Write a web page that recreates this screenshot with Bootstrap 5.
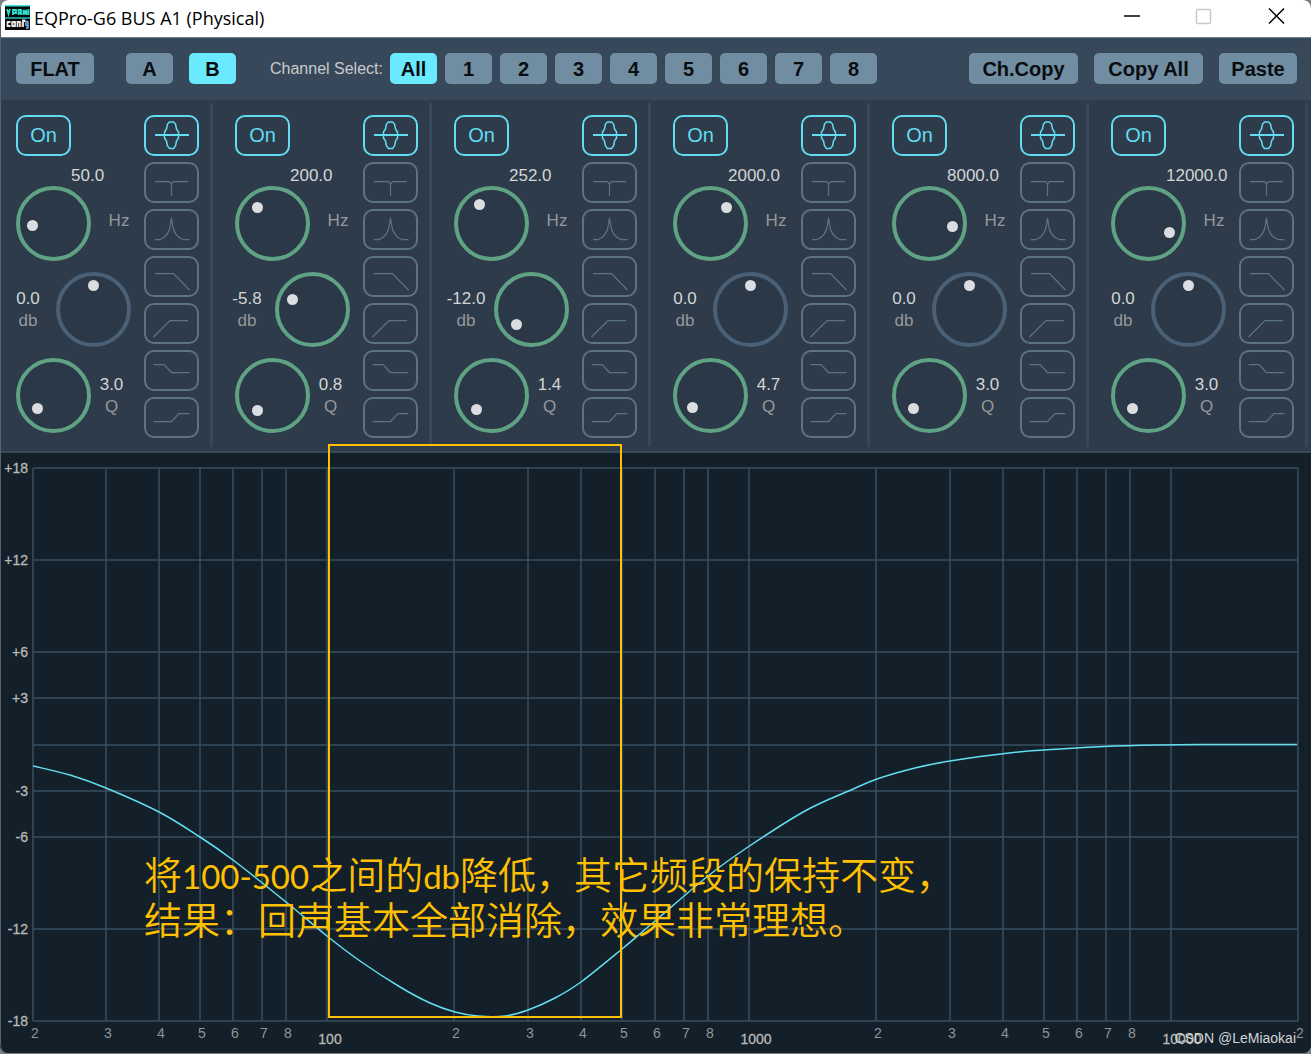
<!DOCTYPE html>
<html lang="en">
<head>
<meta charset="utf-8">
<meta name="viewport" content="width=device-width, initial-scale=1">
<title>EQPro-G6 BUS A1 (Physical)</title>
<link href="https://cdn.jsdelivr.net/npm/bootstrap@5.3.0/dist/css/bootstrap.min.css" rel="stylesheet">
<style>
  :root { --cyan: #6aeaff; --bar: #364859; --panel: #2d3b4b; --key: #718da2; --plot: #13202a; --rule: #3a4d60; --shape: #5b7384; --note: #ffc000; }
  body { font-family: "Liberation Sans", Arial, sans-serif; background: #7d8082; }
  .eq-window { background: var(--plot); border-radius: 8px; overflow: hidden; margin-bottom: 1px; }
  .eq-window::after { content: ""; position: absolute; inset: 0; border-left: 1px solid #55616c; border-radius: 8px; pointer-events: none; }
  .title-strip { height: 37px; background: #fff; padding-left: 5px; padding-bottom: 2px; }
  .title-strip h1 { font: 18px/24px "Open Sans", "Noto Sans", sans-serif; color: #000; }
  .win-btn { width: 72px; height: 37px; border: 0; background: none; padding: 2px 0 0; }
  .tool-strip { background: var(--bar); border-top: 1px solid #6f808c; padding: 15px 14px 16px 16px; }
  .key-btn { --bs-btn-font-size: 20px; --bs-btn-font-weight: 700; --bs-btn-line-height: 30px; --bs-btn-border-width: 0; --bs-btn-border-radius: 5px;
    --bs-btn-color: #0a0d10; --bs-btn-bg: var(--key); --bs-btn-hover-color: #000; --bs-btn-hover-bg: #86a2b6; --bs-btn-active-bg: var(--cyan); --bs-btn-active-color: #0a0d10;
    width: 47px; height: 31px; padding: 1px 0 0; }
  .key-mid { width: 78px; }
  .key-wide { width: 109px; }
  .key-gap { gap: 8px; }
  .select-label { font-size: 16px; line-height: 31px; color: #c9cbcd; margin-left: 34px; margin-right: 7px; }
  .bands { background: var(--panel); padding: 3px 0 4px; margin-right: -2px; }
  .band { flex: 1 1 0; padding-right: 6px; }
  .band-inner { border-right: 3px solid var(--bar); padding: 12px 11px 9px 0; }
  .frame-btn { --bs-btn-padding-x: 0; --bs-btn-padding-y: 0; --bs-btn-border-width: 2px; --bs-btn-border-radius: 10px; --bs-btn-font-size: 20px; --bs-btn-line-height: 36px;
    --bs-btn-color: var(--shape); --bs-btn-border-color: var(--shape); --bs-btn-bg: transparent; --bs-btn-hover-color: var(--cyan); --bs-btn-hover-border-color: var(--cyan);
    --bs-btn-active-color: #62dcf0; --bs-btn-active-border-color: #62dcf0; --bs-btn-active-bg: transparent; width: 55px; height: 41px; }
  .frame-btn svg { display: block; fill: none; stroke: currentColor; stroke-width: 1.25; margin: -2px; }
  .btn-check:checked + .frame-btn svg { stroke-width: 2; }
  .shape-list { gap: 6px; }
  .num { font-size: 17px; line-height: 22px; color: #d4d5d6; }
  .unit { font-size: 17px; line-height: 22px; color: #96989b; }
  .freq-num { padding: 9px 0 0 71px; height: 30px; }
  .dial { width: 75px; height: 75px; }
  .dial svg { display: block; }
  .dial circle:first-child { fill: #2a3848; stroke: #60a284; stroke-width: 4; }
  .dial.flat circle:first-child { stroke: #4a6076; }
  .dial circle:last-child { fill: #dcdde0; }
  .dial input { position: absolute; inset: 0; width: 100%; height: 100%; opacity: 0; margin: 0; }
  .dial-gap { margin-bottom: 11px; }
  .gain-label { width: 56px; }
  .q-label { width: 41px; }
  .hz-label { width: 53px; padding: 0 0 5px 3px; }
  .plot-wrap { border-top: 2px solid #364859; background: var(--plot); }
  .plot-wrap svg { display: block; width: 100%; height: auto; overflow: visible; font-family: "Liberation Sans", Arial, sans-serif; }
  .grid-lines { fill: none; stroke: var(--rule); stroke-width: 1.5; }
  .curve { fill: none; stroke: #63dff0; stroke-width: 1.5; }
  .tick-y, .tick-hz { font-size: 14px; fill: #b9b8b5; stroke: #b9b8b5; stroke-width: .3; }
  .tick-y { text-anchor: end; }
  .tick-hz, .tick-x { text-anchor: middle; }
  .tick-x { font-size: 14px; fill: #8f959a; }
  .note-box { fill: none; stroke: var(--note); stroke-width: 2; }
  .note-text { font: 350 38px "Noto Sans CJK SC", sans-serif; fill: var(--note); }
  .note-text .latin { font: 400 33px Lato, sans-serif; }
  .credit { font-size: 14px; fill: #d2d4d6; text-anchor: end; }
</style>
<script src="https://cdn.jsdelivr.net/npm/bootstrap@5.3.0/dist/js/bootstrap.bundle.min.js"></script>
</head>
<body>
<svg class="d-none" aria-hidden="true">
  <symbol id="shape-0" viewBox="0 0 55 41"><path d="M11 20h34"/><path stroke-width="1.5" d="M25.500 7h4l2 2 1 5 2 3v6l-2 3-1 5-2 2.500h-4l-2-2.500-1-5-2-3v-6l2-3 1-5z"/></symbol>
  <symbol id="shape-1" viewBox="0 0 55 41"><path d="M11 19.500h14.500l2 2.500 2-2.500H44M27.500 21v13"/></symbol>
  <symbol id="shape-2" viewBox="0 0 55 41"><path d="M11 30.500h5c6-2 10-8 10.500-15l1-6.500 1 6.500c.5 7 4.500 13 10.500 15h6.500"/></symbol>
  <symbol id="shape-3" viewBox="0 0 55 41"><path d="M11 17.500h18.500L45.500 34"/></symbol>
  <symbol id="shape-4" viewBox="0 0 55 41"><path d="M9.500 34L26 17.500h18"/></symbol>
  <symbol id="shape-5" viewBox="0 0 55 41"><path d="M9.500 14.500H20l7.500 8h18"/></symbol>
  <symbol id="shape-6" viewBox="0 0 55 41"><path d="M9.500 24.500h18l7.500-8h10.500"/></symbol>
</svg>

<main class="eq-window position-relative">
  <header class="title-strip d-flex align-items-center">
    <svg width="25" height="25" viewBox="0 0 25 25" aria-hidden="true">
      <path fill="#050708" d="M0 0h25v25H0z"/><path fill="#35e3dc" d="M0 0h25v1.500H0z"/><path fill="#1d8f8c" d="M0 12h25v2H0z"/>
      <path fill="none" stroke="#2fe0d0" stroke-width="1.800" d="M2 4l1.500 5L5 4M8 10V5h3v3H8M13.500 10V5h2.500v5M13.500 8H16M18.500 10V5l1.500 3 1.500-3v5M23.500 4v6"/>
      <path fill="none" stroke="#e9ecec" stroke-width="1.800" d="M5.500 17H2.500v4h3M7.500 17h2.500v4H7.500zM12.500 22v-5H15v5M19.500 17v-1.500H18V22"/>
      <path fill="none" stroke="#e48c58" stroke-width="1.200" d="M6.500 17v4M16 17v5"/><path fill="none" stroke="#7ab5ee" stroke-width="1.500" d="M23 16.500h-2v4h2v-4V23h-2"/>
    </svg>
    <h1 class="mb-0 ms-1">EQPro-G6 BUS A1 (Physical)</h1>
    <div class="d-flex ms-auto">
      <button class="win-btn" type="button" aria-label="Minimize"><svg width="72" height="35"><path d="M29 15h16" stroke="#000" stroke-width="1.500"/></svg></button>
      <button class="win-btn" type="button" aria-label="Maximize" disabled><svg width="72" height="35"><rect x="29.500" y="8.500" width="14" height="14" rx="1" fill="none" stroke="#c9c9c9" stroke-width="1.500"/></svg></button>
      <button class="win-btn" type="button" aria-label="Close"><svg width="72" height="35"><path d="M30 7.500l15 15m0-15l-15 15" stroke="#000" stroke-width="1.500"/></svg></button>
    </div>
  </header>

  <nav class="tool-strip d-flex align-items-center" aria-label="Equalizer actions">
    <button class="btn key-btn key-mid" type="button">FLAT</button>
    <div class="d-flex gap-3 ms-3 ps-3">
      <button class="btn key-btn" type="button">A</button>
      <button class="btn key-btn active" type="button" aria-pressed="true">B</button>
    </div>
    <span class="select-label text-nowrap" id="ch-label">Channel Select:</span>
    <div class="d-flex key-gap" role="group" aria-labelledby="ch-label">
      <button class="btn key-btn active" type="button" aria-pressed="true">All</button>
      <button class="btn key-btn" type="button">1</button>
      <button class="btn key-btn" type="button">2</button>
      <button class="btn key-btn" type="button">3</button>
      <button class="btn key-btn" type="button">4</button>
      <button class="btn key-btn" type="button">5</button>
      <button class="btn key-btn" type="button">6</button>
      <button class="btn key-btn" type="button">7</button>
      <button class="btn key-btn" type="button">8</button>
    </div>
    <div class="d-flex gap-3 ms-auto">
      <button class="btn key-btn key-wide" type="button">Ch.Copy</button>
      <button class="btn key-btn key-wide" type="button">Copy All</button>
      <button class="btn key-btn key-mid" type="button">Paste</button>
    </div>
  </nav>

  <section class="bands d-flex" id="bands" aria-label="Filter bands"></section>

  <section class="plot-wrap" aria-label="Frequency response">
    <svg viewBox="0 453 1311 600" id="plot">
      <path class="grid-lines" id="grid"/>
      <path class="curve" id="curve"/>
      <g id="ticks"></g>
      <text class="credit" x="1296" y="1043">CSDN @LeMiaokai</text>
      <rect class="note-box" x="329" y="445" width="292" height="572"/>
      <text class="note-text" x="144" y="889">将<tspan class="latin">100-500</tspan>之间的<tspan class="latin">db</tspan>降低，其它频段的保持不变，</text>
      <text class="note-text" x="144" y="934">结果：回声基本全部消除，效果非常理想。</text>
    </svg>
  </section>
</main>

<script>
  const bands = [
    { hz: '50.0',    gain: '0.0',   q: '3.0', dots: [[-21, 2],   [0, -24],   [-16, 13]] },
    { hz: '200.0',   gain: '-5.8',  q: '0.8', dots: [[-15, -16], [-20, -10], [-15, 15]] },
    { hz: '252.0',   gain: '-12.0', q: '1.4', dots: [[-12, -19], [-15, 15],  [-15, 14]] },
    { hz: '2000.0',  gain: '0.0',   q: '4.7', dots: [[16, -16],  [0, -24],   [-18, 12]] },
    { hz: '8000.0',  gain: '0.0',   q: '3.0', dots: [[23, 3],    [0, -24],   [-16, 13]] },
    { hz: '12000.0', gain: '0.0',   q: '3.0', dots: [[21, 9],    [0, -24],   [-16, 13]] }
  ];
  const shapes = ['Peak', 'Notch', 'Band pass', 'Low pass', 'High pass', 'Low shelf', 'High shelf'];

  const dial = (name, value, min, max, [dx, dy], flat) => `
    <label class="dial position-relative ${flat ? 'flat' : ''}">
      <svg width="75" height="75" viewBox="0 0 75 75"><circle cx="37.5" cy="37.5" r="35.5"/><circle cx="${37.5 + dx}" cy="${37.5 + dy}" r="5.5"/></svg>
      <input type="range" aria-label="${name}" min="${min}" max="${max}" step="0.1" value="${value}">
    </label>`;

  document.getElementById('bands').innerHTML = bands.map((b, i) => `
    <div class="band"><div class="band-inner d-flex justify-content-between">
      <div>
        <div class="ps-3">
          <input class="btn-check" type="checkbox" id="on-${i}" checked>
          <label class="btn frame-btn d-block" for="on-${i}">On</label>
        </div>
        <div class="freq-num num">${b.hz}</div>
        <div class="d-flex align-items-center ps-3 dial-gap">
          ${dial('Frequency', b.hz, 20, 20000, b.dots[0])}
          <span class="unit hz-label text-center">Hz</span>
        </div>
        <div class="d-flex align-items-center dial-gap">
          <div class="gain-label text-center"><div class="num">${b.gain}</div><div class="unit">db</div></div>
          ${dial('Gain', b.gain, -36, 18, b.dots[1], b.gain === '0.0')}
        </div>
        <div class="d-flex align-items-center ps-3">
          ${dial('Q factor', b.q, 0.3, 100, b.dots[2])}
          <div class="q-label text-center"><div class="num">${b.q}</div><div class="unit">Q</div></div>
        </div>
      </div>
      <div class="shape-list d-flex flex-column">
        ${shapes.map((s, k) => `<div><input class="btn-check" type="radio" name="shape-${i}" id="s-${i}-${k}" ${k ? '' : 'checked'}>
        <label class="btn frame-btn d-block" for="s-${i}-${k}" aria-label="${s}"><svg width="55" height="41"><use href="#shape-${k}"/></svg></label></div>`).join('')}
      </div>
    </div></div>`).join('');

  // Log frequency axis: 20 Hz to 20 kHz, one decade is 422 units wide
  const xAt = f => Math.max(33, Math.round(32 + 422 * Math.log10(f / 20)));
  const yAt = db => Math.round(744.5 - db * 15.375);
  let grid = '', ticks = '';
  for (const db of [18, 12, 6, 3, 0, -3, -6, -12, -18]) {
    grid += `M33 ${yAt(db)}H1298`;
    if (db) ticks += `<text class="tick-y" x="28" y="${yAt(db) + 5}">${db > 0 ? '+' : ''}${db}</text>`;
  }
  for (const decade of [10, 100, 1000, 10000]) {
    for (const n of [1, 2, 3, 4, 5, 6, 7, 8]) {
      const f = n * decade;
      if (f < 20 || f > 20000) continue;
      grid += `M${xAt(f)} 468V1021`;
      ticks += n === 1
        ? `<text class="tick-hz" x="${xAt(f) + (f > 100 ? (f > 1000 ? 11 : 7) : 3)}" y="1044">${f}</text>`
        : `<text class="tick-x" x="${xAt(f) + 2}" y="1038">${n}</text>`;
    }
  }
  document.getElementById('grid').setAttribute('d', grid);
  document.getElementById('ticks').innerHTML = ticks;

  // Response samples joined by a smooth spline
  const pts = [[33,766],[70,775],[106,788],[159,812],[200,837],[233,860],[286,902],[327,936],[360,961],[400,987],[430,1003],[455,1012],[478,1016],[505,1016],[528,1010],[555,998],[581,982],[622,949],[655,921],[708,876],[748,847],[805,811],[851,790],[877,779],[915,768],[950,761],[1009,753],[1060,749],[1104,746.5],[1157,745],[1200,744.5],[1297,744.5]];
  let d = `M${pts[0]}`;
  for (let i = 0; i < pts.length - 1; i++) {
    const a = pts[i - 1] || pts[i], b = pts[i], c = pts[i + 1], e = pts[i + 2] || c;
    d += `C${b[0] + (c[0] - a[0]) / 6} ${b[1] + (c[1] - a[1]) / 6} ${c[0] - (e[0] - b[0]) / 6} ${c[1] - (e[1] - b[1]) / 6} ${c}`;
  }
  document.getElementById('curve').setAttribute('d', d);
</script>
</body>
</html>
